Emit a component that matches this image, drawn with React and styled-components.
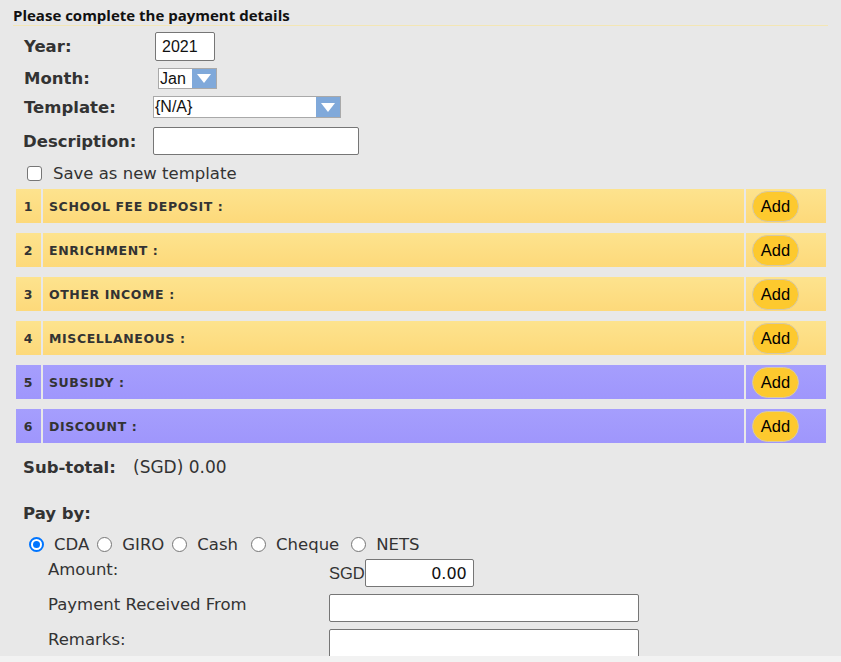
import React from "react";
import styled, { createGlobalStyle } from "styled-components";

const GlobalStyle = createGlobalStyle`
  body {
    margin: 0;
    background: #f2f2f2;
    font-family: "DejaVu Sans", Verdana, sans-serif;
  }
`;

const Page = styled.div`
  height: 656px;
  overflow: hidden;
  background: #e8e8e8;
  color: #333;
`;

const Header = styled.div`
  margin: 0 13px;
  padding-top: 5px;
  height: 20px;
  line-height: 20px;
  font-family: "Open Sans", sans-serif;
  font-weight: 700;
  font-size: 15px;
  color: #111;
  border-bottom: 1px solid #f3e6b4;
`;

const Form = styled.div`
  padding: 6px 0 0 0;
`;

const FieldRow = styled.div`
  display: flex;
  align-items: center;
  height: ${(p) => p.h}px;
  margin-bottom: ${(p) => p.mb || 0}px;
  padding-left: ${(p) => p.pl || 24}px;
`;

const Label = styled.div`
  width: ${(p) => p.w}px;
  font-weight: 700;
  font-size: 16.5px;
  color: #333;
`;

const TextBox = styled.div`
  box-sizing: border-box;
  width: ${(p) => p.w}px;
  height: ${(p) => p.h || 28}px;
  background: #fff;
  border: 1px solid #767676;
  border-radius: 2px;
  font-family: ${(p) =>
    p.mono ? '"DejaVu Sans", Verdana, sans-serif' : '"Liberation Sans", Arial, sans-serif'};
  font-size: 16px;
  color: #111;
  display: flex;
  align-items: center;
  justify-content: ${(p) => (p.right ? "flex-end" : "flex-start")};
  padding: 0 6px;
`;

const Select = styled.div`
  box-sizing: border-box;
  width: ${(p) => p.w}px;
  height: ${(p) => p.h}px;
  background: #fff;
  border: 1px solid #a9a9a9;
  display: flex;
  align-items: stretch;
  font-family: "Liberation Sans", Arial, sans-serif;
  font-size: 16px;
  color: #111;
  margin-left: ${(p) => p.ml || 0}px;
`;

const SelectText = styled.span`
  flex: 1;
  line-height: ${(p) => p.lh}px;
  padding-left: 1px;
`;

const Arrow = styled.span`
  width: 24px;
  background: #80a9da;
  display: flex;
  align-items: center;
  justify-content: center;
`;

const CheckRow = styled.label`
  display: flex;
  align-items: center;
  height: 24px;
  padding-left: 27px;
  font-size: 16.5px;
  color: #333;
  margin-bottom: 4px;
`;

const CheckBox = styled.span`
  box-sizing: border-box;
  width: 15px;
  height: 15px;
  border: 1px solid #767676;
  border-radius: 3px;
  background: #fff;
  margin-right: 11px;
`;

const Table = styled.div`
  display: flex;
  flex-direction: column;
  gap: 10px;
  margin: 0 15px 0 16px;
`;

const Row = styled.div`
  display: grid;
  grid-template-columns: 25px 1fr 80px;
  column-gap: 2px;
  height: 34px;
`;

const Cell = styled.div`
  display: flex;
  align-items: center;
  background: ${(p) =>
    p.tone === "purple"
      ? "linear-gradient(#a59efd, #9f96fc)"
      : "linear-gradient(#fde38e, #fdd97a)"};
  font-weight: 700;
  font-size: 12.5px;
  color: #333;
  letter-spacing: 0.6px;
  justify-content: ${(p) => (p.center ? "center" : "flex-start")};
  padding-left: ${(p) => p.pl || 0}px;
`;

const AddButton = styled.button`
  width: 47px;
  height: 31px;
  border-radius: 16px;
  border: 1px solid #d6c9a6;
  background: #fdc92e;
  font-family: "Liberation Sans", Arial, sans-serif;
  font-size: 16.5px;
  color: #000;
  padding: 0;
  margin-left: 6px;
`;

const SubTotal = styled.div`
  display: flex;
  align-items: center;
  height: 24px;
  margin: 12px 0 0 23px;
  font-size: 17px;
  color: #333;
`;

const Bold = styled.span`
  font-weight: 700;
  font-size: 16.5px;
  width: ${(p) => p.w}px;
`;

const PayBy = styled.div`
  margin: 23px 0 0 23px;
  height: 24px;
  line-height: 24px;
  font-weight: 700;
  font-size: 16.5px;
  color: #333;
`;

const Radios = styled.div`
  display: flex;
  align-items: center;
  height: 24px;
  margin: 6px 0 0 29px;
  font-size: 16.5px;
  color: #333;
`;

const Radio = styled.span`
  box-sizing: border-box;
  width: 15px;
  height: 15px;
  border-radius: 50%;
  border: ${(p) => (p.on ? "2px solid #0075ff" : "1px solid #767676")};
  background: #fff;
  display: inline-flex;
  align-items: center;
  justify-content: center;
  margin-right: 10px;
  &::after {
    content: "";
    width: 7px;
    height: 7px;
    border-radius: 50%;
    background: ${(p) => (p.on ? "#0075ff" : "transparent")};
  }
`;

const RadioText = styled.span`
  margin-right: ${(p) => p.mr}px;
`;

const Details = styled.div`
  display: grid;
  grid-template-columns: 281px auto;
  row-gap: 7px;
  margin: 3px 0 0 48px;
  font-size: 16.5px;
  color: #333;
`;

const DetailLabel = styled.div`
  align-self: start;
  line-height: 22px;
`;

const Amount = styled.div`
  display: flex;
  align-items: center;
  font-family: "Liberation Sans", Arial, sans-serif;
  font-size: 16.5px;
  color: #333;
`;

const arrow = (
  <svg width="14" height="9" viewBox="0 0 14 9">
    <path d="M0 0 H14 L7 9 Z" fill="#fff" />
  </svg>
);

const rows = [
  { n: 1, label: "SCHOOL FEE DEPOSIT :", tone: "yellow" },
  { n: 2, label: "ENRICHMENT :", tone: "yellow" },
  { n: 3, label: "OTHER INCOME :", tone: "yellow" },
  { n: 4, label: "MISCELLANEOUS :", tone: "yellow" },
  { n: 5, label: "SUBSIDY :", tone: "purple" },
  { n: 6, label: "DISCOUNT :", tone: "purple" },
];

const payModes = [
  { t: "CDA", on: true, mr: 8 },
  { t: "GIRO", mr: 8 },
  { t: "Cash", mr: 13 },
  { t: "Cheque", mr: 12 },
  { t: "NETS", mr: 0 },
];

export default function App() {
  return (
    <Page>
      <GlobalStyle />
      <Header>Please complete the payment details</Header>
      <Form>
        <FieldRow h={29} mb={7}>
          <Label w={131}>Year:</Label>
          <TextBox w={60} h={29}>2021</TextBox>
        </FieldRow>
        <FieldRow h={20} mb={8}>
          <Label w={131}>Month:</Label>
          <Select w={59} h={21} ml={3}>
            <SelectText lh={19}>Jan</SelectText>
            <Arrow>{arrow}</Arrow>
          </Select>
        </FieldRow>
        <FieldRow h={22} mb={9}>
          <Label w={129}>Template:</Label>
          <Select w={188} h={22}>
            <SelectText lh={20}>{"{N/A}"}</SelectText>
            <Arrow>{arrow}</Arrow>
          </Select>
        </FieldRow>
        <FieldRow h={28} mb={6} pl={23}>
          <Label w={130}>Description:</Label>
          <TextBox w={206} h={28} />
        </FieldRow>
        <CheckRow>
          <CheckBox />
          Save as new template
        </CheckRow>
      </Form>

      <Table>
        {rows.map((r) => (
          <Row key={r.n}>
            <Cell tone={r.tone} center>
              {r.n}
            </Cell>
            <Cell tone={r.tone} pl={6}>
              {r.label}
            </Cell>
            <Cell tone={r.tone}>
              <AddButton>Add</AddButton>
            </Cell>
          </Row>
        ))}
      </Table>

      <SubTotal>
        <Bold w={110}>Sub-total:</Bold>
        (SGD) 0.00
      </SubTotal>

      <PayBy>Pay by:</PayBy>
      <Radios>
        {payModes.map((m) => (
          <React.Fragment key={m.t}>
            <Radio on={m.on} />
            <RadioText mr={m.mr}>{m.t}</RadioText>
          </React.Fragment>
        ))}
      </Radios>

      <Details>
        <DetailLabel>Amount:</DetailLabel>
        <Amount>
          SGD
          <TextBox w={109} h={28} right mono>
            0.00
          </TextBox>
        </Amount>
        <DetailLabel>Payment Received From</DetailLabel>
        <TextBox w={310} h={28} />
        <DetailLabel>Remarks:</DetailLabel>
        <TextBox w={310} h={29} />
      </Details>
    </Page>
  );
}
